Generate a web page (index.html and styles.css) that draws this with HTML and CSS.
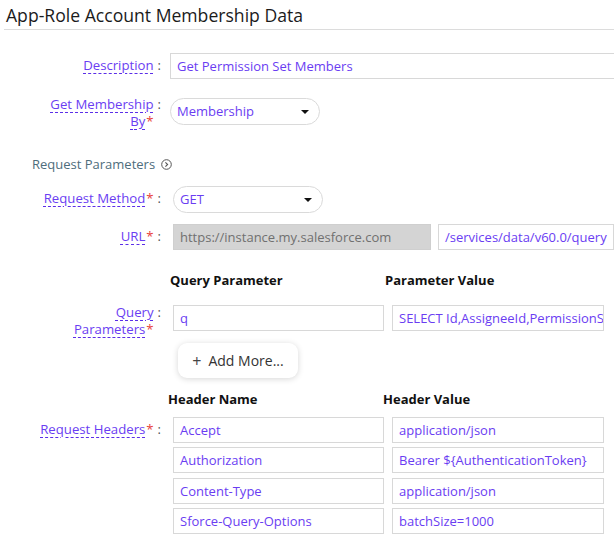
FILE: index.html
```html
<!DOCTYPE html>
<html>
<head>
<meta charset="utf-8">
<link rel="stylesheet" href="styles.css">
</head>
<body>
<div class="page">
  <h1 class="title">App-Role Account Membership Data</h1>
  <div class="form">
    <div class="row r-desc">
      <div class="label"><div class="ltext"><span class="lbl">Description</span></div><span class="colon">:</span></div>
      <div class="ctrl"><div class="input full">Get Permission Set Members</div></div>
    </div>
    <div class="row r-memb">
      <div class="label"><div class="ltext"><span class="lbl">Get Membership By</span><span class="req">*</span></div><span class="colon">:</span></div>
      <div class="ctrl"><div class="select">Membership<span class="caret"></span></div></div>
    </div>
    <div class="section">Request Parameters <span class="sec-icon"><svg width="11" height="11" viewBox="0 0 11 11"><circle cx="5.5" cy="5.5" r="4.8" fill="none" stroke="#555" stroke-width="1"/><path d="M4.4 3.3 L6.6 5.5 L4.4 7.7" fill="none" stroke="#555" stroke-width="1.1"/></svg></span></div>
    <div class="row r-meth">
      <div class="label"><div class="ltext"><span class="lbl">Request Method</span><span class="req">*</span></div><span class="colon">:</span></div>
      <div class="ctrl shift"><div class="select">GET<span class="caret"></span></div></div>
    </div>
    <div class="row r-url">
      <div class="label"><div class="ltext"><span class="lbl">URL</span><span class="req">*</span></div><span class="colon">:</span></div>
      <div class="ctrl shift url">
        <div class="input disabled">https://instance.my.salesforce.com</div>
        <div class="input path">/services/data/v60.0/query</div>
      </div>
    </div>
    <div class="row colhead r-qh">
      <div class="label"></div>
      <div class="ctrl heads"><span class="h1c">Query Parameter</span><span class="h2c">Parameter Value</span></div>
    </div>
    <div class="row r-query">
      <div class="label"><div class="ltext"><span class="lbl">Query Parameters</span><span class="req">*</span></div><span class="colon">:</span></div>
      <div class="ctrl shift">
        <div class="pair">
          <div class="input cell">q</div>
          <div class="input cell">SELECT Id,AssigneeId,PermissionSetId FROM PermissionSetAssignment</div>
        </div>
        <button class="addmore"><span class="plus">+</span>Add More...</button>
      </div>
    </div>
    <div class="row colhead r-hh">
      <div class="label"></div>
      <div class="ctrl heads"><span class="h1c hn">Header Name</span><span class="h2c">Header Value</span></div>
    </div>
    <div class="row r-head">
      <div class="label"><div class="ltext"><span class="lbl">Request Headers</span><span class="req">*</span></div><span class="colon">:</span></div>
      <div class="ctrl shift rows">
        <div class="pair"><div class="input cell">Accept</div><div class="input cell">application/json</div></div>
        <div class="pair"><div class="input cell">Authorization</div><div class="input cell">Bearer ${AuthenticationToken}</div></div>
        <div class="pair"><div class="input cell">Content-Type</div><div class="input cell">application/json</div></div>
        <div class="pair"><div class="input cell">Sforce-Query-Options</div><div class="input cell">batchSize=1000</div></div>
      </div>
    </div>
  </div>
</div>
</body>
</html>
```
FILE: styles.css
```css
html, body {
  margin: 0;
  padding: 0;
  background: #fff;
}
body {
  font-family: "Open Sans", "Noto Sans", sans-serif;
  font-size: 13px;
  color: #333;
  width: 614px;
  height: 537px;
  overflow: hidden;
}
.page {
  padding: 0;
}
.title {
  margin: 0 0 0 4px;
  padding: 3px 0 0 2px;
  height: 26px;
  font-size: 17.6px;
  font-weight: 400;
  color: #1b1b1b;
  line-height: 24px;
  border-bottom: 1px solid #dcdcdc;
}
.form {
  padding-top: 23px;
}
.row {
  display: flex;
  align-items: flex-start;
}
.label {
  width: 170px;
  flex: none;
  display: flex;
  justify-content: flex-end;
  padding: 4px 9px 0 0;
  box-sizing: border-box;
}
.ltext {
  width: 114px;
  text-align: right;
  line-height: 17px;
  font-size: 13.2px;
}
.lbl {
  color: #6a3df2;
  text-decoration: underline dashed #5b2ee8;
  text-decoration-thickness: 1px;
  text-underline-offset: 3px;
}
.req {
  color: #e8413b;
  margin-left: 1px;
}
.colon {
  padding-left: 4px;
  color: #555;
  line-height: 17px;
}
.ctrl {
  flex: 1;
  min-width: 0;
}
.ctrl.shift {
  margin-left: 3px;
}
.input {
  height: 26px;
  box-sizing: border-box;
  border: 1px solid #d8d8d8;
  padding: 0 6px;
  line-height: 24px;
  color: #6a3df2;
  background: #fff;
  white-space: nowrap;
  overflow: hidden;
}
.input.full {
  width: 460px;
}
.select {
  position: relative;
  width: 150px;
  height: 27px;
  box-sizing: border-box;
  border: 1px solid #dadada;
  border-radius: 14px;
  padding: 0 6px;
  line-height: 25px;
  color: #6a3df2;
}
.caret {
  position: absolute;
  right: 10px;
  top: 11px;
  width: 0;
  height: 0;
  border-left: 4px solid transparent;
  border-right: 4px solid transparent;
  border-top: 4px solid #111;
}
.r-memb {
  margin-top: 19px;
}
.r-memb .label {
  padding-top: 0;
  margin-top: -2px;
}
.section {
  margin: 25px 0 0 32px;
  color: #4e6d7c;
  line-height: 18px;
}
.sec-icon {
  display: inline-block;
  vertical-align: -1px;
  margin-left: 2px;
}
.r-meth {
  margin-top: 12px;
}
.r-url {
  margin-top: 11px;
}
.url {
  display: flex;
  gap: 7px;
}
.input.disabled {
  width: 258px;
  flex: none;
  background: #d4d4d4;
  border-color: #cfcfcf;
  color: #707070;
}
.input.path {
  flex: 1;
}
.colhead {
  margin-top: 20px;
  height: 20px;
}
.heads {
  display: flex;
  font-weight: 700;
  color: #111;
  line-height: 20px;
}
.h1c {
  width: 215px;
}
.hn {
  margin-left: -2px;
}
.r-query {
  margin-top: 15px;
}
.r-query .label {
  padding-top: 0;
  margin-top: -1px;
}
.pair {
  display: flex;
  gap: 8px;
}
.input.cell {
  width: 211px;
  flex: none;
  height: 26px;
  color: #6a3df2;
  padding: 0 6px;
}
.pair .cell:last-child {
  width: 212px;
}
.addmore {
  display: flex;
  align-items: center;
  justify-content: center;
  margin: 12px 0 0 5px;
  width: 120px;
  height: 35px;
  border: none;
  border-radius: 9px;
  background: #fff;
  box-shadow: 0 1px 6px rgba(0, 0, 0, 0.16);
  font-family: inherit;
  font-size: 14px;
  color: #333;
  padding: 0;
}
.plus {
  font-size: 16px;
  color: #444;
  margin-right: 7px;
  line-height: 1;
}
.r-hh {
  margin-top: 11px;
}
.r-head {
  margin-top: 8px;
}
.rows {
  display: flex;
  flex-direction: column;
  gap: 4.4px;
}
```
